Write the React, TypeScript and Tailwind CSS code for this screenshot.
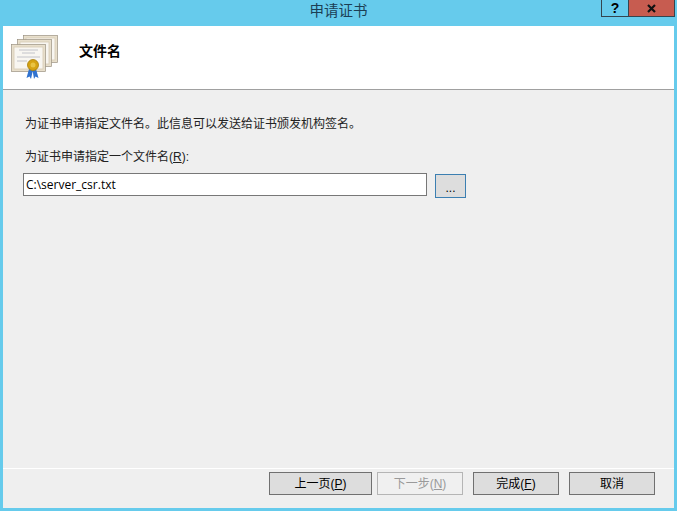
const cjk = "font-['Liberation_Sans','Noto_Sans_CJK_SC',sans-serif]";

function CertSheet({ x, y }: { x: number; y: number }) {
  return (
    <g transform={`translate(${x} ${y})`}>
      <rect x="0.5" y="0.5" width="34" height="27" fill="#e8dfcc" stroke="#9a9282" strokeWidth="0.7" />
      <rect x="3" y="3" width="29" height="22" fill="#f8f6f1" stroke="#d6cbb4" strokeWidth="0.8" />
    </g>
  );
}

function CertIcon() {
  return (
    <svg width="50" height="48" viewBox="0 0 50 48">
      <CertSheet x={12} y={1} />
      <CertSheet x={6} y={5} />
      <CertSheet x={0} y={10} />
      <path d="M8 16h19M11 19h13M6 23h23M6 27h10" stroke="#b4b7c0" strokeWidth="0.8" fill="none" />
      <path d="M18 35l-2.5 9 3-1.500 1.500 2.500 2-9zM25 35l2.500 9-3-1.500-1.500 2.500-1.500-9z" fill="#2f72d0" />
      <circle cx="22" cy="31" r="5.500" fill="#d6a312" stroke="#a67d0c" strokeWidth="0.8" />
      <circle cx="22" cy="31" r="2.500" fill="#e9c443" />
    </svg>
  );
}

function WizardButton({ label, hotkey, disabled, wide }: { label: string; hotkey?: string; disabled?: boolean; wide?: boolean }) {
  return (
    <button
      className={`flex h-[23px] items-center justify-center border text-[12px] ${wide ? "w-[103px]" : "w-[86px]"} ${
        disabled ? "border-[#b5b5b5] bg-[#f0f0f0] text-[#9a9a9a]" : "border-[#707070] bg-[#dddddd] text-black"
      }`}
    >
      {label}
      {hotkey && (
        <span>
          (<span className="underline">{hotkey}</span>)
        </span>
      )}
    </button>
  );
}

export default function App() {
  return (
    <div className={`flex h-[511px] w-[677px] flex-col overflow-hidden bg-[#66cbec] px-[3px] pb-[3px] text-black ${cjk}`}>
      {/* Title bar */}
      <div className="-mx-[3px] grid h-[26px] shrink-0 grid-cols-[1fr_auto_1fr]">
        <div />
        <div className="pt-[1px] text-[14.5px] leading-[20px] text-[#1c3f55]">申请证书</div>
        <div className="flex justify-end pr-[2px]">
          <div className="flex h-[17px] border-x border-b border-[#34454f]">
            <div className="flex w-[27px] items-center justify-center border-r border-[#34454f] text-[14px] font-bold leading-none">?</div>
            <div className="flex w-[45px] items-center justify-center bg-[#c75c50]">
              <svg width="9" height="9" viewBox="0 0 9 9">
                <path d="M1 1l7 7M8 1l-7 7" stroke="#111111" strokeWidth="2.200" fill="none" />
              </svg>
            </div>
          </div>
        </div>
      </div>

      <div className="flex min-h-0 flex-1 flex-col bg-[#efefef]">
        {/* Header */}
        <div className="flex h-[64px] shrink-0 border-b border-[#a0a0a0] bg-white">
          <div className="pl-[8px] pt-[8px]">
            <CertIcon />
          </div>
          <div className="pl-[18px] pt-[16px] text-[14px] font-bold leading-[18px]">文件名</div>
        </div>

        {/* Body */}
        <div className="flex-1 pl-[20px] pt-[25px]">
          <p className="pl-[2px] text-[12px] leading-[18px] text-[#222222]">为证书申请指定文件名。此信息可以发送给证书颁发机构签名。</p>
          <p className="mt-[15px] pl-[2px] text-[12px] leading-[18px] text-[#222222]">
            为证书申请指定一个文件名(<span className="underline">R</span>):
          </p>
          <div className="mt-[7px] flex items-start">
            <input
              readOnly
              value="C:\server_csr.txt"
              className="h-[23px] w-[404px] border border-[#777777] bg-white px-[2px] pb-[1px] font-['Open_Sans',sans-serif] text-[12px] text-black outline-none"
            />
            <button className="ml-[8px] mt-[1px] h-[24px] w-[31px] border border-[#3c7fb1] bg-[#dddddd] pt-[3px] text-[12px] leading-none">...</button>
          </div>
        </div>

        {/* Footer */}
        <div className="flex h-[40px] shrink-0 items-start justify-end gap-[10px] border-t border-white pr-[19px] pt-[3px]">
          <div className="flex gap-[5px]">
            <WizardButton label="上一页" hotkey="P" wide />
            <WizardButton label="下一步" hotkey="N" disabled />
          </div>
          <WizardButton label="完成" hotkey="F" />
          <WizardButton label="取消" />
        </div>
      </div>
    </div>
  );
}
